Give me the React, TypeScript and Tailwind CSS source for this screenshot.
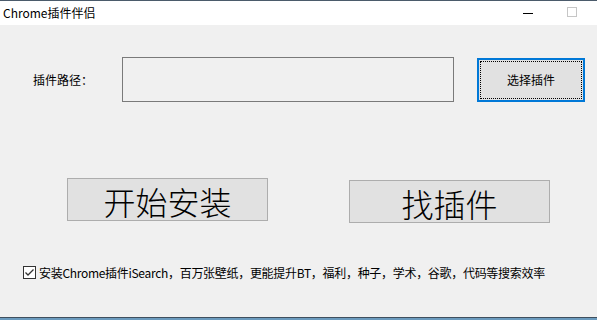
import React, { useState } from "react";

const cjk = "font-['Noto_Sans_CJK_SC',sans-serif]";

export default function App() {
  const [checked, setChecked] = useState(true);

  return (
    <div className={`w-[597px] h-[320px] flex flex-col bg-[#f0f0f0] overflow-hidden text-black ${cjk}`}>
      {/* Title bar */}
      <div className="h-px bg-[#4b5b6b]" />
      <div className="h-[24px] bg-white flex items-center">
        <span className="pl-[3px] text-[12px] leading-none">Chrome插件伴侣</span>
        <div className="ml-auto flex items-center">
          <span className="w-[10px] h-px bg-black mr-[34px] mt-px" />
          <span className="w-[10px] h-[10px] border border-[#c6c6c6] mr-[20px] -mt-[2px]" />
        </div>
      </div>

      {/* Body */}
      <div className="flex-1 flex flex-col">
        {/* Path row */}
        <div className="flex items-start mt-[32px] pl-[33px]">
          <span className="w-[89px] h-[45px] flex items-center text-[12px]">插件路径：</span>
          <div className="w-[332px] h-[45px] border border-[#7a7a7a] bg-[#f0f0f0]" />
          <button className="ml-[23px] mt-px w-[108px] h-[44px] border-2 border-[#0078d7] bg-[#e1e1e1] p-px">
            <div className="w-full h-full border border-dotted border-black flex items-center justify-center text-[12px]">
              选择插件
            </div>
          </button>
        </div>

        {/* Big buttons */}
        <div className="flex items-start mt-[76px] pl-[67px]">
          <button className="w-[201px] h-[43px] border border-[#adadad] bg-[#e1e1e1] flex items-center justify-center text-[32px] font-light leading-none pt-[3px]">
            开始安装
          </button>
          <button className="ml-[81px] mt-[2px] w-[201px] h-[43px] border border-[#adadad] bg-[#e1e1e1] flex items-center justify-center text-[32px] font-light leading-none pt-[3px]">
            找插件
          </button>
        </div>

        {/* Checkbox row */}
        <label className="flex items-center mt-[43px] pl-[23px] cursor-default">
          <span
            onClick={() => setChecked(!checked)}
            className="w-[13px] h-[13px] border border-[#333333] bg-white flex items-center justify-center"
          >
            {checked && (
              <svg width="11" height="11" viewBox="0 0 11 11">
                <path d="M1.5 5.5 L4 8 L9.5 2.5" fill="none" stroke="#333333" strokeWidth="1.3" />
              </svg>
            )}
          </span>
          <span className="ml-[3px] text-[12px] leading-none tracking-[-0.3px]">
            安装Chrome插件iSearch，百万张壁纸，更能提升BT，福利，种子，学术，谷歌，代码等搜索效率
          </span>
        </label>
      </div>

      {/* Bottom edge */}
      <div className="h-px bg-[#3f4f5e]" />
      <div className="h-[2px] bg-[#6b9bbe]" />
    </div>
  );
}
